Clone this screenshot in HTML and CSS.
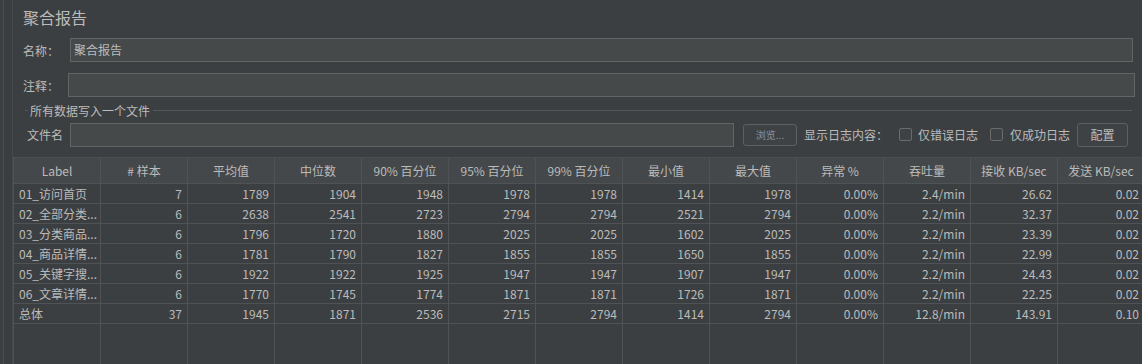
FILE: index.html
```html
<!DOCTYPE html>
<html lang="zh">
<head>
<meta charset="utf-8">
<title>聚合报告</title>
<link rel="stylesheet" href="styles.css">
</head>
<body>
<div class="app">
  <div class="gutter"><div class="gutter-inner"></div></div>
  <div class="main">
    <div class="form">
      <div class="title">聚合报告</div>
      <div class="row row-name">
        <span class="lbl lbl-name">名称：</span>
        <div class="input">聚合报告</div>
      </div>
      <div class="row row-note">
        <span class="lbl lbl-note">注释：</span>
        <div class="input input-note"></div>
      </div>
      <div class="fieldset">
        <div class="legend">
          <span class="legend-line legend-line-start"></span>
          <span class="legend-text">所有数据写入一个文件</span>
          <span class="legend-line legend-line-end"></span>
        </div>
        <div class="file-row">
          <span class="lbl lbl-file">文件名</span>
          <div class="input input-file"></div>
          <div class="btn btn-browse">浏览...</div>
          <span class="txt txt-show">显示日志内容：</span>
          <span class="checkbox cb-1"></span>
          <span class="txt txt-cb">仅错误日志</span>
          <span class="checkbox cb-2"></span>
          <span class="txt txt-cb">仅成功日志</span>
          <div class="btn btn-config">配置</div>
        </div>
      </div>
    </div>
    <div class="table-wrap">
      <table class="grid">
        <thead>
          <tr>
            <th>Label</th><th># 样本</th><th>平均值</th><th>中位数</th><th>90% 百分位</th><th>95% 百分位</th><th>99% 百分位</th><th>最小值</th><th>最大值</th><th>异常 %</th><th>吞吐量</th><th>接收 KB/sec</th><th>发送 KB/sec</th>
          </tr>
        </thead>
        <tbody>
          <tr><td class="l">01_访问首页</td><td>7</td><td>1789</td><td>1904</td><td>1948</td><td>1978</td><td>1978</td><td>1414</td><td>1978</td><td>0.00%</td><td>2.4/min</td><td>26.62</td><td>0.02</td></tr>
          <tr><td class="l">02_全部分类...</td><td>6</td><td>2638</td><td>2541</td><td>2723</td><td>2794</td><td>2794</td><td>2521</td><td>2794</td><td>0.00%</td><td>2.2/min</td><td>32.37</td><td>0.02</td></tr>
          <tr><td class="l">03_分类商品...</td><td>6</td><td>1796</td><td>1720</td><td>1880</td><td>2025</td><td>2025</td><td>1602</td><td>2025</td><td>0.00%</td><td>2.2/min</td><td>23.39</td><td>0.02</td></tr>
          <tr><td class="l">04_商品详情...</td><td>6</td><td>1781</td><td>1790</td><td>1827</td><td>1855</td><td>1855</td><td>1650</td><td>1855</td><td>0.00%</td><td>2.2/min</td><td>22.99</td><td>0.02</td></tr>
          <tr><td class="l">05_关键字搜...</td><td>6</td><td>1922</td><td>1922</td><td>1925</td><td>1947</td><td>1947</td><td>1907</td><td>1947</td><td>0.00%</td><td>2.2/min</td><td>24.43</td><td>0.02</td></tr>
          <tr><td class="l">06_文章详情...</td><td>6</td><td>1770</td><td>1745</td><td>1774</td><td>1871</td><td>1871</td><td>1726</td><td>1871</td><td>0.00%</td><td>2.2/min</td><td>22.25</td><td>0.02</td></tr>
          <tr><td class="l">总体</td><td>37</td><td>1945</td><td>1871</td><td>2536</td><td>2715</td><td>2794</td><td>1414</td><td>2794</td><td>0.00%</td><td>12.8/min</td><td>143.91</td><td>0.10</td></tr>
          <tr class="filler"><td></td><td></td><td></td><td></td><td></td><td></td><td></td><td></td><td></td><td></td><td></td><td></td><td></td></tr>
        </tbody>
      </table>
    </div>
  </div>
</div>
</body>
</html>
```

FILE: styles.css
```css
html, body {
  margin: 0;
  padding: 0;
  width: 1142px;
  height: 364px;
  overflow: hidden;
  background: #3c3f41;
}

body {
  font-family: "Noto Sans CJK SC", "Noto Sans", sans-serif;
  font-size: 12px;
  color: #bbbbbb;
}

.app {
  display: flex;
  height: 364px;
}

.gutter {
  width: 13px;
  flex: 0 0 13px;
  padding-left: 3px;
  box-sizing: border-box;
}

.gutter-inner {
  width: 10px;
  height: 100%;
  box-sizing: border-box;
  border-left: 1px solid #4a4d4f;
  border-right: 1px solid #46494b;
  background: #3b3e40;
}

.main {
  flex: 1;
  min-width: 0;
  overflow: hidden;
}

.form {
  padding: 0 9px 0 10px;
}

.title {
  padding-top: 5px;
  height: 24px;
  line-height: 24px;
  font-size: 16px;
  color: #bbbbbb;
}

.row {
  display: flex;
  align-items: center;
  height: 24px;
}

.row-name {
  margin-top: 9px;
}

.row-note {
  margin-top: 11px;
}

.lbl {
  flex: 0 0 auto;
  white-space: nowrap;
}

.lbl-name {
  width: 47px;
}

.lbl-note {
  width: 45px;
}

.input {
  flex: 1;
  height: 24px;
  box-sizing: border-box;
  background: #45494a;
  border: 1px solid #646464;
  padding: 0 3px;
  line-height: 22px;
  color: #bbbbbb;
}

.input-note {
  margin-right: -2px;
}

.fieldset {
  margin: 0 1px 0 2px;
}

.legend {
  display: flex;
  align-items: center;
  height: 13px;
  margin-top: 7px;
}

.legend-line {
  height: 1px;
  background: #56595b;
}

.legend-line-start {
  width: 3px;
  margin-right: 2px;
}

.legend-line-end {
  flex: 1;
  margin-left: 3px;
}

.legend-text {
  line-height: 13px;
}

.file-row {
  display: flex;
  align-items: center;
  height: 25px;
  margin-top: 5px;
  padding-left: 2px;
}

.lbl-file {
  width: 43px;
}

.input-file {
  flex: 0 0 664px;
  height: 24px;
}

.btn {
  box-sizing: border-box;
  border: 1px solid #5e6060;
  border-radius: 3px;
  background: #3e4244;
  text-align: center;
  color: #bbbbbb;
}

.btn-browse {
  margin-left: 9px;
  width: 54px;
  height: 22px;
  line-height: 20px;
  font-size: 10px;
  color: #8e9398;
}

.btn-config {
  margin-left: 7px;
  width: 51px;
  height: 24px;
  line-height: 22px;
}

.txt {
  white-space: nowrap;
}

.txt-show {
  margin-left: 7px;
}

.checkbox {
  width: 13px;
  height: 13px;
  box-sizing: border-box;
  border: 1px solid #6b6b6b;
  border-radius: 2px;
  background: #3e4244;
}

.cb-1 {
  margin-left: 11px;
}

.cb-2 {
  margin-left: 12px;
}

.txt-cb {
  margin-left: 6px;
}

.cb-2 + .txt-cb {
  margin-left: 7px;
}

.table-wrap {
  margin-top: 10px;
  width: 1140px;
}

.grid {
  border-collapse: separate;
  border-spacing: 0;
  table-layout: fixed;
  width: 1132px;
  border-left: 1px solid #4f5254;
  border-top: 1px solid #4b4e50;
}

.grid th,
.grid td {
  width: 76px;
  border-right: 1px solid #505355;
  border-bottom: 1px solid #505355;
  padding: 0 5px;
  white-space: nowrap;
  overflow: hidden;
  font-weight: normal;
  color: #bbbbbb;
}

.grid th {
  height: 25px;
  background: #45484a;
  text-align: center;
  line-height: 25px;
}

.grid td {
  height: 19px;
  line-height: 19px;
  text-align: right;
}

.grid td.l {
  text-align: left;
}

.grid .filler td {
  height: 60px;
  border-bottom: none;
}
```
